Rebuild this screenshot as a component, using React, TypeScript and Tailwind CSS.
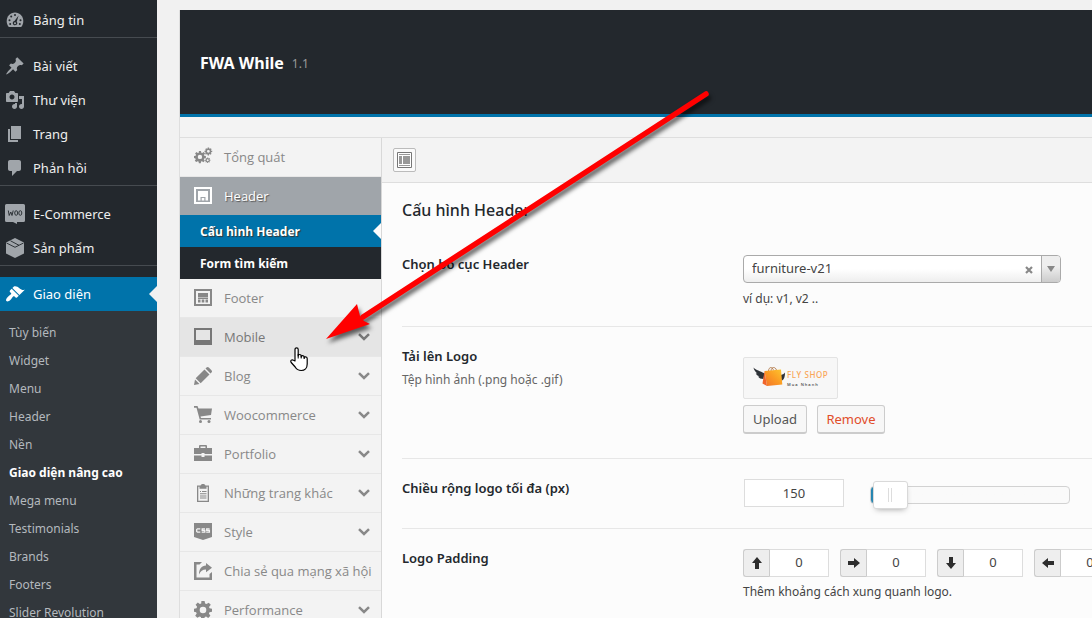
import { useState } from "react";
import type { ReactNode } from "react";

const dashIcons: Record<string, ReactNode> = {
  dashboard: (
    <>
      <path d="M3.8 17h12.4c1.4-1.6 2.1-3.8 2.1-6 0-4.7-3.6-8.5-8.3-8.5S1.7 6.3 1.7 11c0 2.2.7 4.4 2.1 6z" />
      <g fill="#23282d">
        <circle cx="10" cy="5" r="1" />
        <circle cx="6.2" cy="6.6" r="1" />
        <circle cx="4.5" cy="10.3" r="1" />
        <circle cx="5.2" cy="14" r="1" />
        <circle cx="15.5" cy="10.3" r="1" />
        <circle cx="14.8" cy="14" r="1" />
        <path d="M13.6 5.6l-1.9 6.1c.5.5.7 1.1.6 1.8-.2 1-1.2 1.7-2.3 1.7s-2.1-.8-2.2-1.8c-.2-1.1.6-2.2 1.7-2.4z" />
      </g>
      <circle cx="10" cy="13.2" r="1" />
    </>
  ),
  post: (
    <path d="M10.44 3.02l1.82-1.82 6.36 6.35-1.83 1.82c-1.05-.68-2.48-.57-3.41.36l-.75.75c-.92.93-1.04 2.35-.35 3.41l-1.83 1.82-2.41-2.41-2.8 2.79c-.42.42-3.38 2.71-3.8 2.29s1.86-3.39 2.28-3.81l2.79-2.79L4.1 9.36l1.83-1.82c1.05.69 2.48.57 3.4-.36l.75-.75c.93-.92 1.05-2.35.36-3.41z" />
  ),
  media: (
    <path
      fillRule="evenodd"
      d="M13 11V4c0-.55-.45-1-1-1h-1.67L9 1H5L3.67 3H2c-.55 0-1 .45-1 1v7c0 .55.45 1 1 1h10c.55 0 1-.45 1-1zM7 4.5c1.38 0 2.5 1.12 2.5 2.5S8.38 9.5 7 9.5 4.5 8.38 4.5 7 5.62 4.5 7 4.5zM14 6h5v10.5c0 1.38-1.12 2.5-2.5 2.5S14 17.88 14 16.5s1.12-2.5 2.5-2.5c.17 0 .34.02.5.05V9h-3V6zm-4 8.05V13h2v3.5c0 1.38-1.12 2.5-2.5 2.5S7 17.88 7 16.5 8.12 14 9.5 14c.17 0 .34.02.5.05z"
    />
  ),
  page: <path d="M6 15V2h10v13H6zm-1 1h8v2H3V5h2v11z" />,
  comments: <path d="M5 2h9c1.1 0 2 .9 2 2v7c0 1.1-.9 2-2 2h-2l-5 5v-5H5c-1.1 0-2-.9-2-2V4c0-1.1.9-2 2-2z" />,
  woo: (
    <>
      <path d="M1.5 0h17A1.5 1.5 0 0 1 20 1.500v15a1.500 1.500 0 0 1-1.500 1.500H12v2l-4-2H1.500A1.500 1.500 0 0 1 0 16.500v-15A1.500 1.500 0 0 1 1.500 0z" />
      <g fill="none" stroke="#23282d" strokeWidth="0.9">
        <path d="M3.300 6.500l.9 5 1.600-3.500 1.200 3.500 1.200-5" />
        <ellipse cx="11.200" cy="9" rx="1.500" ry="2.300" />
        <ellipse cx="15.300" cy="9" rx="1.500" ry="2.300" />
      </g>
    </>
  ),
  product: (
    <>
      <path d="M10 0l9 4.500v11L10 20l-9-4.500v-11z" />
      <path d="M1.500 5L10 9.300 18.500 5M5.500 2.800l8.500 4.500" fill="none" stroke="#23282d" strokeWidth="0.9" />
    </>
  ),
  appearance: (
    <path d="M14.480 11.060L7.410 3.990l1.500-1.500c.5-.56 2.300-.47 3.510.32 1.210.8 1.430 1.280 2.910 2.100 1.180.64 2.450 1.260 4.450.85zm-.71.71L6.700 4.700 4.930 6.470c-.39.39-.39 1.020 0 1.410l1.060 1.060c.39.39.39 1.030 0 1.420-.6.6-1.430 1.110-2.210 1.690-.35.26-.7.53-1.010.84C1.430 14.230.4 16.080 1.400 17.070c.99 1 2.840-.03 4.180-1.360.31-.31.58-.66.85-1.020.57-.78 1.080-1.610 1.690-2.210.39-.39 1.020-.39 1.410 0l1.060 1.060c.39.39 1.020.39 1.410 0z" />
  ),
};

const GEAR =
  "M7.400 0h3.200l.5 2.500 1.400.6L14.700 1.700 16.800 3.800 15 5.900l.6 1.400 2.400.4v3l-2.500.5-.6 1.400 1.500 2.100-2.200 2.200-2.100-1.500-1.400.6-.4 2.500H7.400l-.5-2.500-1.400-.6-2.100 1.400-2.200-2.100 1.500-2.100-.6-1.400L0 10.700v-3l2.500-.5.6-1.400-1.500-2 2.200-2.200 2 1.500 1.400-.6zM9 5.700a3.300 3.300 0 1 0 0 6.600 3.300 3.300 0 0 0 0-6.600z";

const menuIcons: Record<string, ReactNode> = {
  cogs: (
    <g fillRule="evenodd">
      <g transform="translate(0 3) scale(.66)">
        <path d={GEAR} />
      </g>
      <g transform="translate(10.500 -.5) scale(.43)">
        <path d={GEAR} />
      </g>
      <g transform="translate(11 9.500) scale(.3)">
        <path d={GEAR} />
      </g>
    </g>
  ),
  header: (
    <>
      <path fillRule="evenodd" d="M0 0h18v17H0zM2 2v13h14V2z" />
      <path d="M4 4h10v6H4zM4 10h2.500v3.500H4zM7.700 11h2.600v2.500H7.700zM11.500 10H14v3.500h-2.500z" />
    </>
  ),
  footer: (
    <>
      <path fillRule="evenodd" d="M0 0h18v17H0zM2 2v13h14V2z" />
      <path d="M4 4h10v4.500H4zM4 9h10v1H4zM4 10.500h2.500v3H4zM7.700 10.500h2.600v3H7.700zM11.500 10.500H14v3h-2.500z" />
    </>
  ),
  laptop: <path fillRule="evenodd" d="M0 0h18v17H0zM2 2v10h14V2z" />,
  pencil: (
    <path d="M1.700 11.200L10.500 2.400l5 5-8.800 8.800zM11.500 1.500l1-1a1.600 1.600 0 0 1 2.300 0l2.700 2.700a1.600 1.600 0 0 1 0 2.300l-1 1zM1 12.400L5.500 17 0 18z" />
  ),
  cart: (
    <>
      <path d="M0 0h3.500l1 2.500H18l-1 6.500L6.500 10.500l.5 1.500h10v1.500H5.700L2.500 1.700H0z" />
      <circle cx="6.500" cy="15.500" r="1.500" />
      <circle cx="15" cy="15.500" r="1.500" />
    </>
  ),
  briefcase: (
    <path
      fillRule="evenodd"
      d="M5 3V1a1 1 0 0 1 1-1h6a1 1 0 0 1 1 1v2h5v6h-7.500V8h-3v1H0V3zm1.500 0h5V1.500h-5zM0 10.500h7.500V12h3v-1.500H18V16H0z"
    />
  ),
  clipboard: (
    <>
      <path fillRule="evenodd" d="M3 1.500h3.500L7 .8 8 0h2l1 .8.5.7H15V18H3zm1.300 1.300v13.900h9.400V2.800h-1.200v2h-7v-2z" />
      <path d="M6 7h1v1H6zm2 0h4.500v1H8zM6 9.200h6.500v1H6zm0 2.200h6.500v1H6zm0 2.200h6.500v1H6z" />
    </>
  ),
  css: (
    <>
      <path d="M0 0h18v14l-9 3-9-3z" />
      <path
        d="M6.300 5.800H3.500L2.700 6.600v1.800l.8.8h2.800M11 5.800H8.200v1.600h2.600v1.800H7.700M15.600 5.800h-2.900v1.600h2.700v1.800h-3.200"
        fill="none"
        stroke="#f3f3f3"
        strokeWidth="1.300"
      />
    </>
  ),
  share: (
    <path d="M0 0h8l-2.500 2.500h-3v13h13V12L18 10v8H0zM12 1l6 4.700-6 4.600V7.500c-3.500 0-5.500 1.500-7 5C5 7 7.500 3.700 12 3.500z" />
  ),
  cog: <path fillRule="evenodd" d={GEAR} />,
};

const adminGroups = [
  [{ label: "Bảng tin", icon: "dashboard" }],
  [
    { label: "Bài viết", icon: "post" },
    { label: "Thư viện", icon: "media" },
    { label: "Trang", icon: "page" },
    { label: "Phản hồi", icon: "comments" },
  ],
  [
    { label: "E-Commerce", icon: "woo" },
    { label: "Sản phẩm", icon: "product" },
  ],
];

const submenu = [
  "Tùy biến",
  "Widget",
  "Menu",
  "Header",
  "Nền",
  "Giao diện nâng cao",
  "Mega menu",
  "Testimonials",
  "Brands",
  "Footers",
  "Slider Revolution",
];

const sections = [
  { label: "Footer", icon: "footer", arrow: false },
  { label: "Mobile", icon: "laptop", arrow: true },
  { label: "Blog", icon: "pencil", arrow: true },
  { label: "Woocommerce", icon: "cart", arrow: true },
  { label: "Portfolio", icon: "briefcase", arrow: true },
  { label: "Những trang khác", icon: "clipboard", arrow: true },
  { label: "Style", icon: "css", arrow: true },
  { label: "Chia sẻ qua mạng xã hội", icon: "share", arrow: false },
  { label: "Performance", icon: "cog", arrow: true },
];

const paddings = [
  { side: "top", rotate: "" },
  { side: "right", rotate: "rotate-90" },
  { side: "bottom", rotate: "rotate-180" },
  { side: "left", rotate: "-rotate-90" },
];

function DashIcon({ name }: { name: string }) {
  return (
    <svg viewBox="0 0 20 20" className="h-5 w-5 shrink-0" fill="currentColor">
      {dashIcons[name]}
    </svg>
  );
}

function MenuIcon({ name }: { name: string }) {
  return (
    <svg viewBox="0 0 18 18" className="h-[18px] w-[18px] shrink-0 overflow-visible" fill="currentColor">
      {menuIcons[name]}
    </svg>
  );
}

function AdminMenu() {
  return (
    <nav className="flex w-[157px] shrink-0 flex-col bg-[#23282d] pt-[3px] text-[13px] text-[#eee]">
      {adminGroups.map((group, i) => (
        <div key={i} className="mb-[11px] border-b border-[#464b50]">
          {group.map((item) => (
            <a key={item.label} href="#" className="flex h-[34px] items-center gap-2 pl-[5px]">
              <span className="text-[#a0a5aa]">
                <DashIcon name={item.icon} />
              </span>
              <span className="pt-0.5">{item.label}</span>
            </a>
          ))}
        </div>
      ))}
      <a href="#" className="relative flex h-[34px] shrink-0 items-center gap-2 bg-[#0073aa] pl-[5px] text-white">
        <DashIcon name="appearance" />
        <span className="pt-0.5">Giao diện</span>
        <span className="absolute top-[9px] right-0 border-y-8 border-r-8 border-y-transparent border-r-[#f1f1f1]" />
      </a>
      <div className="flex-1 bg-[#32373c] pt-2 text-[12px] text-[#b4b9be]">
        {submenu.map((label) => (
          <a
            key={label}
            href="#"
            className={`flex h-7 items-center pl-[9px] whitespace-nowrap ${
              label === "Giao diện nâng cao" ? "font-bold text-white" : ""
            }`}
          >
            {label}
          </a>
        ))}
      </div>
    </nav>
  );
}

function SectionMenu() {
  return (
    <nav className="w-[202px] shrink-0 border-r border-[#d8d8d8] font-['Open_Sans',sans-serif] text-[13px] text-[#888]">
      <a href="#" className="flex h-[39px] items-center gap-3 border-b border-[#e7e7e7] pl-[14px]">
        <MenuIcon name="cogs" />
        <span className="pt-0.5">Tổng quát</span>
      </a>
      <a
        href="#"
        className="flex h-[38px] items-center gap-3 bg-[#a0a5aa] pl-[14px] font-medium text-white text-shadow-[1px_1px_1px_#555]"
      >
        <MenuIcon name="header" />
        <span className="pt-0.5">Header</span>
      </a>
      <a
        href="#"
        className="relative flex h-8 items-center bg-[#0073aa] pt-0.5 pl-5 text-[12px] font-bold text-white text-shadow-[1px_1px_1px_#333]"
      >
        Cấu hình Header
        <span className="absolute top-2 right-0 border-y-8 border-r-8 border-y-transparent border-r-[#fcfcfc]" />
      </a>
      <a href="#" className="flex h-8 items-center bg-[#23282d] pt-0.5 pl-5 text-[12px] font-bold text-white">
        Form tìm kiếm
      </a>
      {sections.map((item) => (
        <a
          key={item.label}
          href="#"
          className={`flex h-[39px] items-center gap-3 border-b border-[#e7e7e7] pr-[11px] pl-[14px] whitespace-nowrap ${
            item.label === "Mobile" ? "bg-[#e5e5e5] text-[#777]" : ""
          }`}
        >
          <MenuIcon name={item.icon} />
          <span className="min-w-0 flex-1 pt-0.5">{item.label}</span>
          {item.arrow && (
            <svg viewBox="0 0 12 8" className="h-2 w-3 shrink-0" fill="none" stroke="currentColor" strokeWidth="2.500">
              <path d="M1 1.200l5 4.800 5-4.800" />
            </svg>
          )}
        </a>
      ))}
    </nav>
  );
}

function Logo() {
  return (
    <svg viewBox="0 0 78 24" className="h-6 w-[78px]" role="img" aria-label="Fly Shop">
      <defs>
        <linearGradient id="bag" x1="0" y1="1" x2="1" y2="0">
          <stop offset="0" stopColor="#f2722b" />
          <stop offset=".5" stopColor="#fb9a23" />
          <stop offset="1" stopColor="#fdc62f" />
        </linearGradient>
      </defs>
      <path d="M1.500 1.500C4 4.500 9 5 12.500 7.500l-1 5.500c-2.500 0-4.500-.8-5.500-2.500l1.500-.1C5.500 9.700 4.300 8.700 3.800 7.200l1.500.2C3.500 6 1.800 4 1.500 1.500z" fill="#2e3238" />
      <path d="M33 6.500c-1 1.500-2.500 2-4 2.500v6c2.500-.8 4-3 4-8.500z" fill="#2e3238" />
      <path d="M16.500 5c.3-4.500 4-4.500 5-.6M19 5c.3-4.500 4.500-4.500 5.500-.8" fill="none" stroke="#a96a35" strokeWidth=".8" />
      <path d="M12.500 5L29 3.500l1.300 15L15 20z" fill="url(#bag)" />
      <path d="M12.500 5L15 20l-4.500-2.500z" fill="#f0652b" />
      <text x="35" y="12" fontSize="8" fontWeight="500" letterSpacing=".6" fill="#f9a657">
        FLY SHOP
      </text>
      <text x="35" y="20" fontSize="4" fontWeight="600" letterSpacing="1" fill="#555">
        Mua Nhanh
      </text>
    </svg>
  );
}

function Options() {
  const [width, setWidth] = useState(150);
  const label = "text-[13px] font-semibold text-[#23282d]";

  return (
    <main className="min-w-0 flex-1 bg-[#fcfcfc]">
      <div className="flex h-[45px] items-center border-b border-[#dedede] bg-[#f3f3f3] pl-[11px]">
        <button
          aria-label="Mở rộng"
          className="flex h-6 w-[23px] items-center justify-center rounded-xs border border-[#bbb] bg-[#fafafa]"
        >
          <svg viewBox="0 0 15 16" className="h-4 w-[15px]">
            <path d="M.5.5h14v15H.5z" fill="#fff" stroke="#777" />
            <path d="M2 2.500h11M2 13.500h11" stroke="#999" />
            <path d="M2 4h3v8H2zM6 4h7v8H6z" fill="#999" />
          </svg>
        </button>
      </div>
      <div className="overflow-hidden pt-[15px] pl-5 text-[12px] text-[#444]">
        <h2 className="text-[16px] leading-6 font-medium text-[#23282d]">Cấu hình Header</h2>

        <div className="flex h-[105px] border-b border-[#e7e7e7] pt-8">
          <label htmlFor="layout" className={`w-[341px] shrink-0 leading-5 ${label}`}>
            Chọn bố cục Header
          </label>
          <div className="pt-px">
            <div className="relative w-[318px]">
              <select
                id="layout"
                className="h-7 w-full appearance-none rounded-[4px] border border-[#aaa] bg-linear-to-t from-[#eee] to-white to-50% pl-2 text-[13px] text-[#444]"
              >
                <option>furniture-v21</option>
              </select>
              <button aria-label="Xóa" className="absolute top-[11px] right-7">
                <svg viewBox="0 0 8 8" className="h-2 w-2" stroke="#888" strokeWidth="2.200">
                  <path d="M1 1l6 6M7 1L1 7" />
                </svg>
              </button>
              <span className="pointer-events-none absolute inset-y-px right-px flex w-[19px] items-center justify-center rounded-r-[3px] border-l border-[#aaa] bg-linear-to-t from-[#ccc] to-[#eee] to-60%">
                <span className="border-x-4 border-t-6 border-x-transparent border-t-[#888]" />
              </span>
            </div>
            <p className="mt-1.5 leading-5">ví dụ: v1, v2 ..</p>
          </div>
        </div>

        <div className="flex h-[132px] border-b border-[#e7e7e7]">
          <div className="w-[341px] shrink-0 pt-[19px]">
            <p className={`leading-5 ${label}`}>Tải lên Logo</p>
            <p className="mt-1 leading-5 text-[#666]">Tệp hình ảnh (.png hoặc .gif)</p>
          </div>
          <div className="pt-[30px]">
            <div className="flex h-[42px] w-[95px] items-center justify-center rounded-xs border border-[#e3e3e3] bg-[#f7f7f7]">
              <Logo />
            </div>
            <div className="mt-1.5 flex gap-2.5 text-[13px]">
              <button className="h-[29px] w-16 rounded-[3px] border border-b-2 border-[#ccc] bg-[#f7f7f7] pt-px text-[#555]">
                Upload
              </button>
              <button className="h-[29px] w-[68px] rounded-[3px] border border-b-2 border-[#ccc] bg-[#f7f7f7] pt-px text-[#e14d2a]">
                Remove
              </button>
            </div>
          </div>
        </div>

        <div className="flex h-[70px] border-b border-[#e7e7e7] pt-[19px]">
          <label htmlFor="max-width" className={`w-[341px] shrink-0 leading-5 ${label}`}>
            Chiều rộng logo tối đa (px)
          </label>
          <div className="flex h-[29px] items-center">
            <input
              id="max-width"
              type="text"
              value={width}
              onChange={(e) => setWidth(Number(e.target.value) || 0)}
              className="mr-[26px] ml-px h-7 w-[100px] border border-[#ddd] bg-white text-center text-[13px]"
            />
            <input
              type="range"
              min={140}
              max={1200}
              value={width}
              onChange={(e) => setWidth(Number(e.target.value))}
              aria-label="Chiều rộng logo tối đa (px)"
              className="mt-1 h-[18px] w-[200px] appearance-none rounded-[4px] border border-[#d2d2d2] bg-linear-to-r from-[#1a85b5] from-2% to-[#fafafa] to-2% [&::-webkit-slider-thumb]:h-7 [&::-webkit-slider-thumb]:w-[35px] [&::-webkit-slider-thumb]:appearance-none [&::-webkit-slider-thumb]:rounded-[3px] [&::-webkit-slider-thumb]:border [&::-webkit-slider-thumb]:border-[#d9d9d9] [&::-webkit-slider-thumb]:bg-white [&::-webkit-slider-thumb]:bg-[linear-gradient(90deg,#ddd_1px,transparent_1px_3px,#ddd_3px)] [&::-webkit-slider-thumb]:bg-size-[4px_14px] [&::-webkit-slider-thumb]:bg-center [&::-webkit-slider-thumb]:bg-no-repeat [&::-webkit-slider-thumb]:shadow-[0_3px_6px_-3px_#999]"
            />
          </div>
        </div>

        <div className="flex pt-[19px]">
          <p className={`w-[341px] shrink-0 leading-5 ${label}`}>Logo Padding</p>
          <div className="pt-px">
            <div className="flex gap-[11px]">
              {paddings.map((item) => (
                <label key={item.side} className="flex h-7 shrink-0">
                  <span className="flex w-[26px] items-center justify-center rounded-l-[3px] border border-r-0 border-[#ccc] bg-[#eee] text-[#2d2d2d]">
                    <svg viewBox="0 0 12 12" className={`h-3 w-3 ${item.rotate}`} fill="currentColor">
                      <path d="M6 0l5 6H8v6H4V6H1z" />
                    </svg>
                  </span>
                  <input
                    type="text"
                    defaultValue="0"
                    aria-label={item.side}
                    className="w-[60px] border border-[#ddd] border-l-[#ccc] bg-white text-center text-[13px]"
                  />
                </label>
              ))}
            </div>
            <p className="mt-[5px] leading-5">Thêm khoảng cách xung quanh logo.</p>
          </div>
        </div>
      </div>
    </main>
  );
}

function Annotation() {
  return (
    <>
      <svg
        viewBox="0 0 390 256"
        className="pointer-events-none absolute top-[87px] left-[322px] h-64 w-[390px] drop-shadow-[2px_4px_2px_rgba(0,0,0,0.6)]"
      >
        <path d="M384 7L41 230" stroke="#f00" strokeWidth="5.500" strokeLinecap="round" />
        <path d="M4 252L35 217l3 12 4 5 6 3z" fill="#f00" />
      </svg>
      <svg viewBox="0 0 18 25" className="pointer-events-none absolute top-[347px] left-[290px] h-[25px] w-[18px]">
        <path
          d="M5 14V2.500C5 .2 8.200.2 8.200 2.500V9c0-2 3-2 3 0v1c0-2 3-1.700 3 .3v.7c0-1.700 3-1.500 3 .5V17c0 4-2.500 6.500-6 6.500-3 0-4.500-1-6-3.500L1.200 15.500C0 13.500 2 12 3.500 13.300z"
          fill="#fff"
          stroke="#000"
          strokeWidth="1.200"
          strokeLinejoin="round"
        />
        <path d="M8.200 7v4.500M11.200 8.500v3M14.200 9.500v2.500" stroke="#000" />
      </svg>
    </>
  );
}

export default function App() {
  return (
    <div className="relative flex h-screen overflow-hidden bg-[#f1f1f1] font-['Noto_Sans',sans-serif]">
      <AdminMenu />
      <div className="flex min-w-0 flex-1 flex-col pt-2.5 pl-[22px]">
        <div className="flex flex-1 flex-col border-l border-[#dedede]">
          <header className="flex h-[107px] shrink-0 items-center gap-2 border-b-3 border-[#0073aa] bg-[#23282d] pt-0.5 pl-5">
            <h1 className="text-[16px] font-bold text-white">FWA While</h1>
            <span className="pt-0.5 text-[12px] text-[#999]">1.1</span>
          </header>
          <div className="h-[21px] shrink-0 border-b border-[#dedede] bg-[#f3f3f3]" />
          <div className="flex flex-1 bg-[#f3f3f3]">
            <SectionMenu />
            <Options />
          </div>
        </div>
      </div>
      <Annotation />
    </div>
  );
}
